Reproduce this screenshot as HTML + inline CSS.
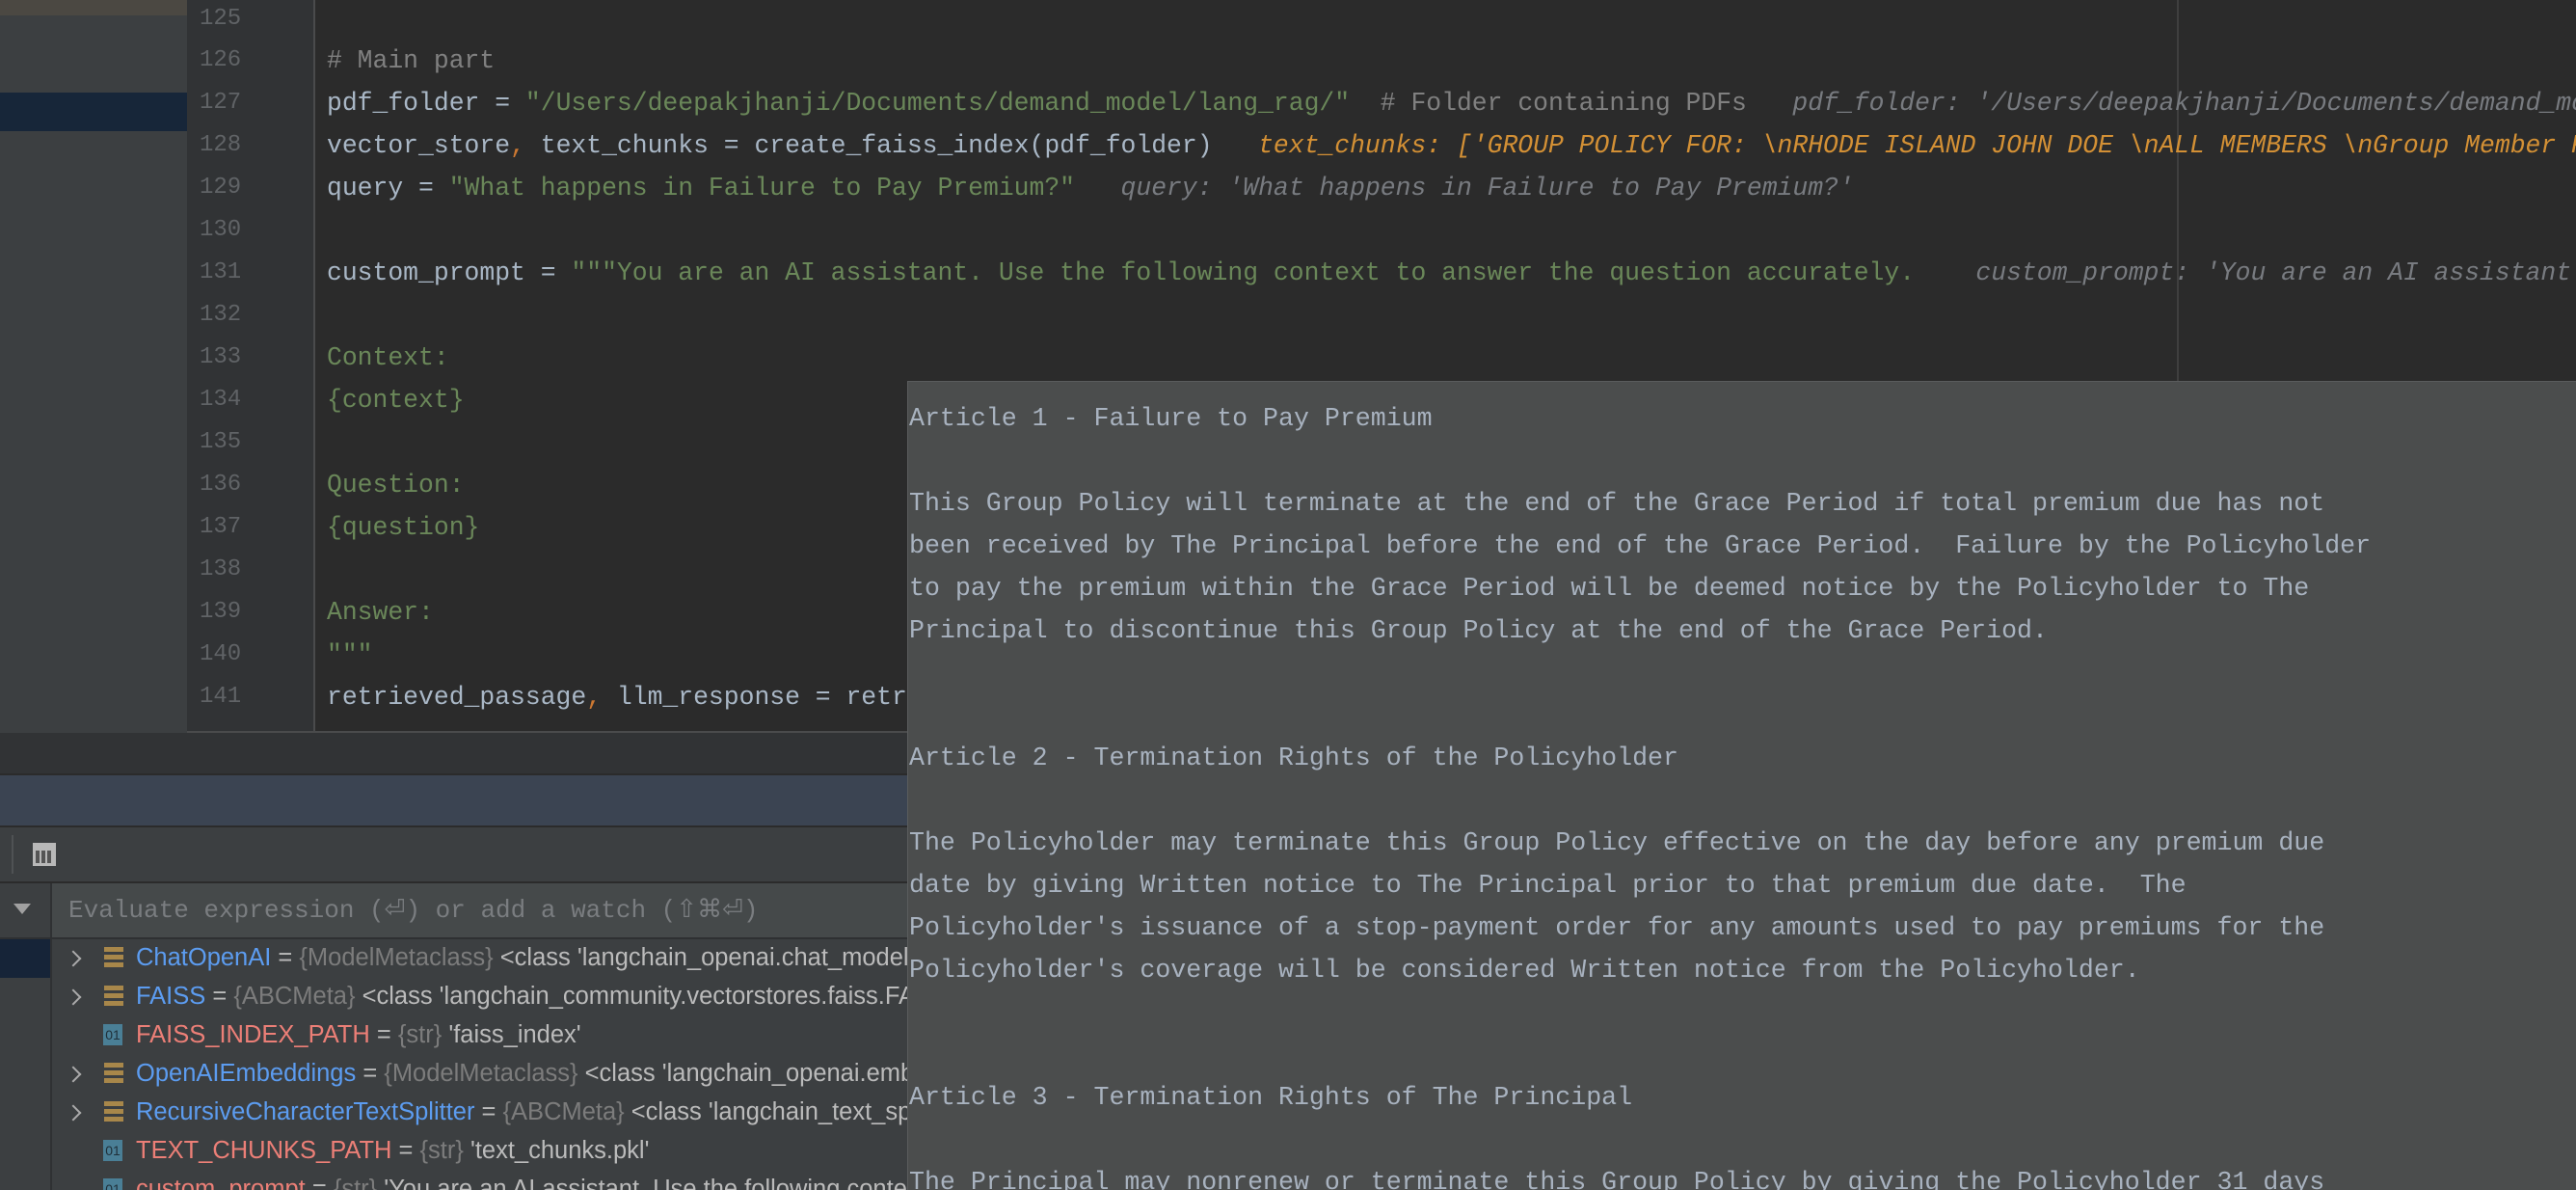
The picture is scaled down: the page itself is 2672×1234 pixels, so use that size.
<!DOCTYPE html>
<html style="width:2672px;height:1234px;overflow:hidden"><head><meta charset="utf-8"><style>
*{margin:0;padding:0;box-sizing:border-box}
body{width:2672px;height:1234px;overflow:hidden;background:#2b2b2b;position:relative;font-family:"Liberation Mono",monospace}
.a{position:absolute}
.ln{position:absolute;left:207px;font-size:24px;color:#606366;line-height:44px;height:44px}
.cl{position:absolute;left:339px;font-size:26.4px;color:#a9b7c6;line-height:44px;height:44px;white-space:pre;width:2333px;overflow:hidden}
.s{color:#6a8759}.c{color:#808080}.o{color:#cc7832}.h{color:#787b80;font-style:italic}.ho{color:#d39035;font-style:italic}
.pl{position:absolute;left:943px;font-size:26.6px;color:#a8b2bf;line-height:44px;white-space:pre}
.r{position:absolute;left:141px;font-family:"Liberation Sans",sans-serif;font-size:25.5px;line-height:40px;white-space:pre;color:#bbbbbb;width:800px;overflow:hidden}
.b{color:#5c9cf0}.rd{color:#ec7f77}.t{color:#7c7c7c}
.chev{position:absolute;left:70px;width:12px;height:12px;border-right:2px solid #aaa;border-top:2px solid #aaa;transform:rotate(45deg)}
.ic{position:absolute;left:108px;width:20px;height:22px;background:repeating-linear-gradient(#a8874a 0 5px,transparent 5px 8px)}
.i01{position:absolute;left:107px;width:20px;height:22px;background:#4a7f96;color:#1f2f38;font-family:"Liberation Sans",sans-serif;font-size:14px;line-height:22px;text-align:center}
</style></head><body>
<div class="a" style="left:0;top:0;width:194px;height:802px;background:#3c3f41"></div>
<div class="a" style="left:0;top:0;width:194px;height:16px;background:#4b4842"></div>
<div class="a" style="left:0;top:96px;width:194px;height:40px;background:#172639"></div>
<div class="a" style="left:194px;top:0;width:132px;height:759px;background:#313335"></div>
<div class="a" style="left:325px;top:0;width:2px;height:759px;background:#4a4b4c"></div>
<div class="a" style="left:2258px;top:0;width:2px;height:759px;background:#3f3f3f"></div>

<div class="ln" style="top:-2px">125</div>
<div class="ln" style="top:41px">126</div>
<div class="ln" style="top:85px">127</div>
<div class="ln" style="top:129px">128</div>
<div class="ln" style="top:173px">129</div>
<div class="ln" style="top:217px">130</div>
<div class="ln" style="top:261px">131</div>
<div class="ln" style="top:305px">132</div>
<div class="ln" style="top:349px">133</div>
<div class="ln" style="top:393px">134</div>
<div class="ln" style="top:437px">135</div>
<div class="ln" style="top:481px">136</div>
<div class="ln" style="top:525px">137</div>
<div class="ln" style="top:569px">138</div>
<div class="ln" style="top:613px">139</div>
<div class="ln" style="top:657px">140</div>
<div class="ln" style="top:701px">141</div>

<div class="cl c" style="top:41px"># Main part</div>
<div class="cl" style="top:85px">pdf_folder = <span class="s">"/Users/deepakjhanji/Documents/demand_model/lang_rag/"</span>  <span class="c"># Folder containing PDFs</span>   <span class="h">pdf_folder: '/Users/deepakjhanji/Documents/demand_model/lang_rag/'</span></div>
<div class="cl" style="top:129px">vector_store<span class="o">,</span> text_chunks = create_faiss_index(pdf_folder)   <span class="ho">text_chunks: ['GROUP POLICY FOR: \nRHODE ISLAND JOHN DOE \nALL MEMBERS \nGroup Member Policy</span></div>
<div class="cl" style="top:173px">query = <span class="s">"What happens in Failure to Pay Premium?"</span>   <span class="h">query: 'What happens in Failure to Pay Premium?'</span></div>
<div class="cl" style="top:261px">custom_prompt = <span class="s">"""You are an AI assistant. Use the following context to answer the question accurately.</span>    <span class="h">custom_prompt: 'You are an AI assistant. Use</span></div>
<div class="cl s" style="top:349px">Context:</div>
<div class="cl s" style="top:393px">{context}</div>
<div class="cl s" style="top:481px">Question:</div>
<div class="cl s" style="top:525px">{question}</div>
<div class="cl s" style="top:613px">Answer:</div>
<div class="cl s" style="top:657px">"""</div>
<div class="cl" style="top:701px">retrieved_passage<span class="o">,</span> llm_response = retrieve_and_answer(query)</div>

<div class="a" style="left:194px;top:758px;width:2478px;height:2px;background:#4a4b4c"></div>
<div class="a" style="left:0;top:760px;width:2672px;height:42px;background:#313335"></div>
<div class="a" style="left:0;top:802px;width:2672px;height:2px;background:#2b2b2b"></div>
<div class="a" style="left:0;top:804px;width:2672px;height:52px;background:#3b4452"></div>
<div class="a" style="left:0;top:856px;width:2672px;height:2px;background:#2b2b2b"></div>
<div class="a" style="left:0;top:858px;width:2672px;height:56px;background:#3c3f41"></div>
<div class="a" style="left:12px;top:866px;width:2px;height:40px;background:#4f5254"></div>
<div class="a" style="left:34px;top:874px;width:24px;height:24px;background:#b8b8b8"></div>
<div class="a" style="left:37px;top:882px;width:18px;height:13px;background:repeating-linear-gradient(90deg,#555 0 4px,transparent 4px 6px),#b8b8b8"></div>
<div class="a" style="left:0;top:914px;width:2672px;height:2px;background:#2b2b2b"></div>
<div class="a" style="left:0;top:916px;width:52px;height:318px;background:#3c3f41"></div>
<div class="a" style="left:52px;top:916px;width:2px;height:318px;background:#2f3133"></div>
<div class="a" style="left:54px;top:916px;width:2618px;height:56px;background:#45494a"></div>
<div class="a" style="left:14px;top:937px;width:0;height:0;border-left:9px solid transparent;border-right:9px solid transparent;border-top:11px solid #a0a0a0"></div>
<div class="a" style="left:71px;top:926px;font-size:26px;color:#7a7d80;line-height:36px;white-space:pre">Evaluate expression (⏎) or add a watch (⇧⌘⏎)</div>
<div class="a" style="left:0;top:972px;width:2672px;height:2px;background:#2e3032"></div>
<div class="a" style="left:54px;top:974px;width:2618px;height:260px;background:#3c3f41"></div>
<div class="a" style="left:0;top:974px;width:52px;height:40px;background:#162438"></div>

<div class="chev" style="top:988px"></div><div class="ic" style="top:982px"></div>
<div class="r" style="top:973px"><span class="b">ChatOpenAI</span> = <span class="t">{ModelMetaclass}</span> &lt;class 'langchain_openai.chat_models.base.ChatOpenAI'&gt;</div>
<div class="chev" style="top:1028px"></div><div class="ic" style="top:1022px"></div>
<div class="r" style="top:1013px"><span class="b">FAISS</span> = <span class="t">{ABCMeta}</span> &lt;class 'langchain_community.vectorstores.faiss.FAISS'&gt;</div>
<div class="i01" style="top:1062px">01</div>
<div class="r" style="top:1053px"><span class="rd">FAISS_INDEX_PATH</span> = <span class="t">{str}</span> 'faiss_index'</div>
<div class="chev" style="top:1108px"></div><div class="ic" style="top:1102px"></div>
<div class="r" style="top:1093px"><span class="b">OpenAIEmbeddings</span> = <span class="t">{ModelMetaclass}</span> &lt;class 'langchain_openai.embeddings'&gt;</div>
<div class="chev" style="top:1148px"></div><div class="ic" style="top:1142px"></div>
<div class="r" style="top:1133px"><span class="b">RecursiveCharacterTextSplitter</span> = <span class="t">{ABCMeta}</span> &lt;class 'langchain_text_splitters'&gt;</div>
<div class="i01" style="top:1182px">01</div>
<div class="r" style="top:1173px"><span class="rd">TEXT_CHUNKS_PATH</span> = <span class="t">{str}</span> 'text_chunks.pkl'</div>
<div class="i01" style="top:1222px">01</div>
<div class="r" style="top:1213px"><span class="rd">custom_prompt</span> = <span class="t">{str}</span> 'You are an AI assistant. Use the following context'</div>

<div class="a" style="left:941px;top:395px;width:1731px;height:839px;background:#4b4d4d;border-left:1px solid #5a5c5d;border-top:1px solid #5a5c5d"></div>
<div class="pl" style="top:412px">Article 1 - Failure to Pay Premium

This Group Policy will terminate at the end of the Grace Period if total premium due has not
been received by The Principal before the end of the Grace Period.  Failure by the Policyholder
to pay the premium within the Grace Period will be deemed notice by the Policyholder to The
Principal to discontinue this Group Policy at the end of the Grace Period.


Article 2 - Termination Rights of the Policyholder

The Policyholder may terminate this Group Policy effective on the day before any premium due
date by giving Written notice to The Principal prior to that premium due date.  The
Policyholder's issuance of a stop-payment order for any amounts used to pay premiums for the
Policyholder's coverage will be considered Written notice from the Policyholder.


Article 3 - Termination Rights of The Principal

The Principal may nonrenew or terminate this Group Policy by giving the Policyholder 31 days</div>
</body></html>
